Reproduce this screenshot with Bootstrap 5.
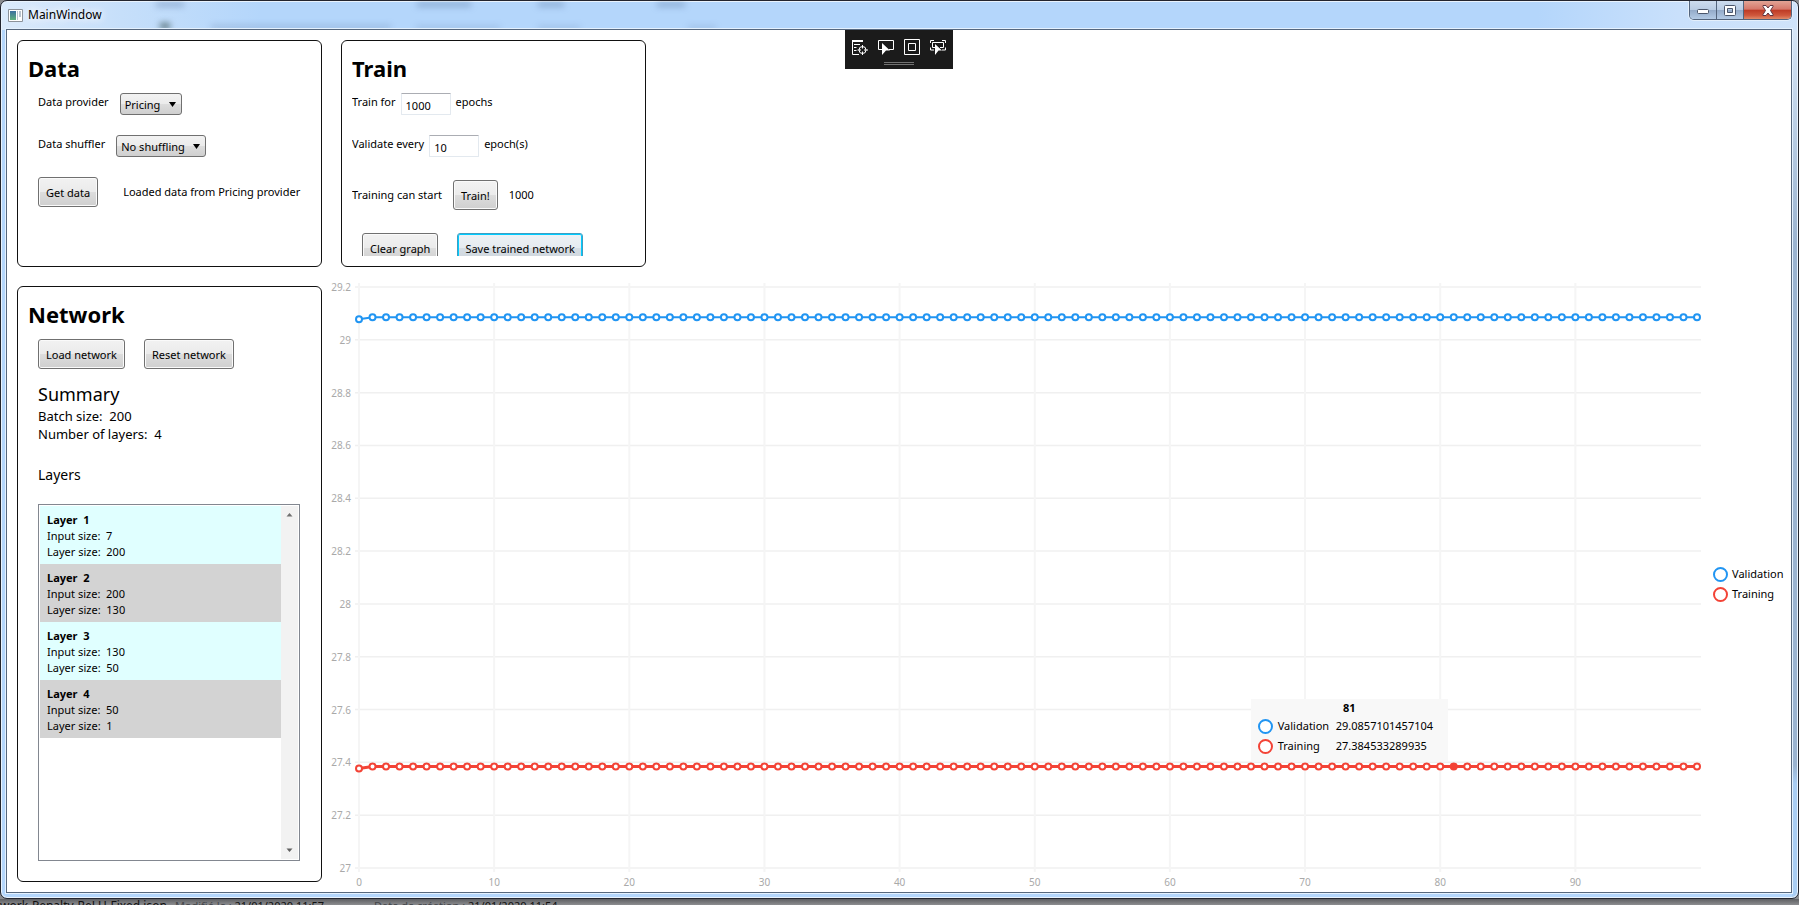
<!DOCTYPE html>
<html lang="en">
<head>
<meta charset="utf-8">
<meta name="viewport" content="width=device-width, initial-scale=1">
<title>MainWindow</title>
<link href="https://cdn.jsdelivr.net/npm/bootstrap@5.3.0/dist/css/bootstrap.min.css" rel="stylesheet">
<style>
  :root { --ui: "Noto Sans", "Open Sans", sans-serif; }
  html, body { height: 100%; }
  body { font: 11px/16px var(--ui); color: #000; background: #fff; overflow: hidden; }

  .desktop { height: 100vh; min-height: 760px; margin-right: 8px; background: #8a8b8e; }
  .window { border: 1px solid #23252e; border-radius: 7px; box-shadow: inset 0 0 0 1px #e9f3fd; padding: 0 6px 5px 5px; overflow: hidden;
    background: linear-gradient(to right, #dbeafb 0, #c6dffa 120px, #b4d6fb 260px, #b4d6fb calc(100% - 260px), #c9e0fb calc(100% - 120px), #cfe3fa 100%) no-repeat 0 0 / 100% 29px,
      linear-gradient(#d6e5f6 0, #9ab3d0 24%, #9ab3d0 82%, #a9cdf3 84%) no-repeat right 0 top 29px / 6px 100%, #b4d6fb; }
  .title-bar { height: 28px; }
  .title-text { font-size: 12px; line-height: 16px; text-shadow: 0 0 8px #fff, 0 0 8px #fff; }
  .title-id { padding: 6px 0 0 2px; gap: 5px; }
  .ghost { position: absolute; left: 0; top: 0; filter: blur(3px); }
  .caption-btns { border: 1px solid #53647c; border-top: 0; border-radius: 0 0 5px 5px; box-shadow: 0 0 0 1px #e4effb; overflow: hidden; height: 19px; }
  .cap-btn { border: 0; padding: 0; width: 27px; background: linear-gradient(#cddcee 0, #b9cce3 48%, #93aac8 50%, #b3cae5 100%); border-right: 1px solid #53647c; }
  .cap-close { width: 47px; border-right: 0; background: linear-gradient(#e2a495 0, #d5776a 46%, #bd3a24 50%, #d0583d 80%, #e08b6a 100%); }
  .cap-btn svg, .tool-btn svg { display: block; margin: auto; }

  .client { background: #fff; border: 1px solid #56677d; box-shadow: 0 0 0 1px #e4f1fe; padding: 10px 3px 10px 10px; }
  .side { width: 305px; flex: none; }
  .panel { border: 1px solid #111; border-radius: 6px; padding: 10px; background: #fff; }
  .panel-short { height: 227px; width: 305px; }
  .clip { height: 100%; overflow: hidden; }
  h1 { font-size: 22px; line-height: 34px; font-weight: 700; margin: 0 0 8px; }
  h2 { font-size: 18px; line-height: 25px; font-weight: 400; margin: 0; }
  h3 { font-size: 14px; line-height: 20px; font-weight: 400; margin: 0; }
  .field { height: 42px; }
  .field label, .field span { padding-top: 1px; }
  .data-body { padding-left: 10px; }
  .data-body .field { gap: 11px; }
  .data-row { gap: 25px; }

  .ui-btn { font: 11px/16px var(--ui); color: #000; height: 30px; padding: 1px 7px 0; border: 1px solid #707070; border-radius: 3px; box-shadow: inset 0 0 0 1px #fafafa; background: linear-gradient(#f2f2f2 0, #ebebeb 50%, #dddddd 50%, #cfcfcf 100%); white-space: nowrap; }
  .ui-btn-on { border-color: #3c9fc4; box-shadow: inset 0 0 0 1px #00ccff; background: linear-gradient(#edf1f5 0, #e5ebf0 50%, #d5dde4 50%, #cdd5dc 100%); }
  .ui-select { appearance: none; font: 11px/20px var(--ui); color: #000; height: 22px; padding: 1px 16px 0 4px; border: 1px solid #707070; border-radius: 3px;
    background: url("data:image/svg+xml,%3Csvg xmlns='http://www.w3.org/2000/svg' width='8' height='5'%3E%3Cpath d='M0 0h7L3.5 5z'/%3E%3C/svg%3E") no-repeat right 4px top 8px, linear-gradient(#f2f2f2 0, #ebebeb 50%, #dddddd 50%, #cfcfcf 100%); }
  .sel-a { width: 62px; }
  .sel-b { width: 90px; }
  .ui-input { width: 50px; height: 22px; font: 11px/18px var(--ui); color: #000; padding: 2px 4px 0; border: 1px solid #e3e9ef; border-top-color: #abadb3; border-radius: 1px; }

  .net-panel { margin-top: 19px; }
  .net-body { padding: 0 11px 10px 10px; }
  .net-btns { gap: 19px; margin-bottom: 13px; }
  .net-body h3 { margin: 22px 0 19px; }
  .facts { font-size: 13px; line-height: 18px; }
  .layer-box { border: 1px solid #828790; padding: 1px; min-height: 0; }
  .layer-item { padding: 6px 7px 4px; background: #e0ffff; }
  .layer-item:nth-child(even) { background: #d3d3d3; }
  .bar-track { width: 17px; background: #f2f2f2; }

  .main-col { padding-left: 19px; min-width: 0; }
  .train-panel .field { gap: 5px; }
  .train-row { gap: 11px; margin-top: 3px; }
  .last-row { gap: 19px; margin: 23px 0 0 10px; }
  .chart-row { margin: 0 0 -10px -10px; min-height: 0; }
  .plot { min-width: 0; }
  .plot svg { position: absolute; inset: 0; width: 100%; height: 100%; }
  .plot text { font: 10px var(--ui); fill: #a9a9a9; }
  .ring { width: 15px; height: 15px; border-radius: 50%; border: 2px solid #2195f2; background: #fff; flex: none; }
  .ring-red { border-color: #f34336; }
  .legend-row { height: 20px; gap: 4px; }
  .legend-col { width: 75px; flex: none; padding-top: 9px; }
  .tip { position: absolute; background: rgba(248,248,248,.94); padding: 1px 7px 5px; width: 197px; transform: translate(-100%, -100%); margin: -5px 0 0 -6px; }
  .tip td { height: 20px; padding: 0; white-space: nowrap; }
  .tip-k { width: 20px; }
  .tip-n { width: 58px; }

  .tools { position: absolute; top: 0; left: 50%; margin-left: -54px; width: 108px; height: 39px; background: #1b1b1b; padding: 8px 2px; }
  .tool-btn { width: 26px; height: 18px; padding: 0; border: 0; background: none; }
  .grip { width: 30px; height: 3px; border: solid #727272; border-width: 1px 0; margin: 6px auto 0; }

  .task-info { height: 6px; background: linear-gradient(#5e5f62, #8c8d90); font: 11px/14px var(--ui); color: #111; white-space: nowrap; gap: 50px; }
  .task-name { font-size: 12px; margin-right: 8px; }
  .dim { color: #44464a; }
</style>
</head>
<body>
<div class="desktop d-flex flex-column">
  <div class="window d-flex flex-column flex-grow-1">
    <header class="title-bar d-flex justify-content-between align-items-start position-relative">
      <svg class="ghost" width="760" height="28" aria-hidden="true" fill="#52709a"><path opacity=".4" d="M150 1h28v5h-28zM411 1h54v5h-54zM532 1h26v5h-26zM651 1h28v5h-28z"/><path opacity=".3" d="M205 24h180v4H205zM410 25h84v3h-84zM532 25h42v3h-42zM682 25h28v3h-28z"/><path fill="#2f4a4a" opacity=".7" d="M154 22h10v6h-10z"/></svg>
      <div class="title-id d-flex align-items-center position-relative">
        <svg width="15" height="13" viewBox="0 0 15 13"><defs><linearGradient id="ic" x2="0" y2="1"><stop stop-color="#3b6fa0"/><stop offset="1" stop-color="#5fb27c"/></linearGradient></defs><path fill="#fff" stroke="#8c929a" d="M.5.5h14v12H.5z"/><path fill="url(#ic)" d="M2 2h6v9H2z"/><path fill="#b8c4cf" d="M9 2h1v9H9zM11 2h2v6h-2z"/></svg>
        <span class="title-text">MainWindow</span>
      </div>
      <div class="caption-btns d-flex position-relative">
        <button class="cap-btn" aria-label="Minimize"><svg width="12" height="8" viewBox="0 0 12 8"><rect x=".5" y="3.500" width="11" height="4" rx="1" fill="#fff" stroke="#4b566b"/></svg></button>
        <button class="cap-btn" aria-label="Maximize"><svg width="12" height="11" viewBox="0 0 12 11"><path fill="#fff" stroke="#4b566b" fill-rule="evenodd" d="M1.500.5h9a1 1 0 0 1 1 1v8a1 1 0 0 1-1 1h-9a1 1 0 0 1-1-1v-8a1 1 0 0 1 1-1zM3.500 3.500v4h5v-4z"/></svg></button>
        <button class="cap-btn cap-close" aria-label="Close"><svg width="12" height="11" viewBox="0 0 12 11"><path fill="#fff" stroke="#5d3440" stroke-linejoin="round" d="M1 .5h3l2 2.500 2-2.500h3v1L8.500 5.500 11 9.500v1H8L6 8l-2 2.500H1v-1l2.500-4L1 1.500z"/></svg></button>
      </div>
    </header>
    <main class="client d-flex flex-grow-1 position-relative">
      <div class="side d-flex flex-column">
        <section class="panel panel-short">
          <h1>Data</h1>
          <div class="data-body">
            <div class="field d-flex"><label for="prov">Data provider</label><select id="prov" class="ui-select sel-a"><option>Pricing</option></select></div>
            <div class="field d-flex"><label for="shuf">Data shuffler</label><select id="shuf" class="ui-select sel-b"><option>No shuffling</option></select></div>
            <div class="data-row d-flex align-items-center"><button class="ui-btn">Get data</button><span>Loaded data from Pricing provider</span></div>
          </div>
        </section>
        <section class="panel net-panel d-flex flex-column flex-grow-1">
          <h1>Network</h1>
          <div class="net-body d-flex flex-column flex-grow-1">
            <div class="d-flex net-btns"><button class="ui-btn">Load network</button><button class="ui-btn">Reset network</button></div>
            <h2>Summary</h2>
            <div class="facts">Batch size:&nbsp; 200</div>
            <div class="facts">Number of layers:&nbsp; 4</div>
            <h3>Layers</h3>
            <div class="layer-box d-flex flex-grow-1">
              <div class="flex-grow-1">
                <div class="layer-item"><b>Layer&nbsp; 1</b><br>Input size:&nbsp; 7<br>Layer size:&nbsp; 200</div>
                <div class="layer-item"><b>Layer&nbsp; 2</b><br>Input size:&nbsp; 200<br>Layer size:&nbsp; 130</div>
                <div class="layer-item"><b>Layer&nbsp; 3</b><br>Input size:&nbsp; 130<br>Layer size:&nbsp; 50</div>
                <div class="layer-item"><b>Layer&nbsp; 4</b><br>Input size:&nbsp; 50<br>Layer size:&nbsp; 1</div>
              </div>
              <div class="bar-track d-flex flex-column justify-content-between align-items-center">
                <svg width="7" height="17" viewBox="0 0 7 17"><path fill="#707070" d="M.5 10.500 3.500 7l3 3.500z"/></svg>
                <svg width="7" height="17" viewBox="0 0 7 17"><path fill="#606060" d="M.5 6.500h6l-3 3.500z"/></svg>
              </div>
            </div>
          </div>
        </section>
      </div>
      <div class="main-col d-flex flex-column flex-grow-1">
        <section class="panel panel-short train-panel">
          <div class="clip">
            <h1>Train</h1>
            <div class="field d-flex"><label for="ep">Train for</label><input id="ep" class="ui-input" value="1000"><span>epochs</span></div>
            <div class="field d-flex"><label for="val">Validate every</label><input id="val" class="ui-input" value="10"><span>epoch(s)</span></div>
            <div class="train-row d-flex align-items-center"><span>Training can start</span><button class="ui-btn">Train!</button><span>1000</span></div>
            <div class="d-flex last-row"><button class="ui-btn">Clear graph</button><button class="ui-btn ui-btn-on">Save trained network</button></div>
          </div>
        </section>
        <div class="chart-row d-flex flex-grow-1">
          <div class="plot position-relative flex-grow-1" id="plot">
            <svg id="chart" role="img" aria-label="Validation and training error"></svg>
            <div class="tip" id="tip">
              <div class="text-center fw-bold">81</div>
              <table>
                <tr><td class="tip-k"><div class="ring"></div></td><td class="tip-n">Validation</td><td>29.0857101457104</td></tr>
                <tr><td><div class="ring ring-red"></div></td><td>Training</td><td>27.384533289935</td></tr>
              </table>
            </div>
          </div>
          <div class="legend-col d-flex flex-column justify-content-center">
            <div class="legend-row d-flex align-items-center"><div class="ring"></div>Validation</div>
            <div class="legend-row d-flex align-items-center"><div class="ring ring-red"></div>Training</div>
          </div>
        </div>
      </div>
      <div class="tools">
        <div class="d-flex">
          <button class="tool-btn" aria-label="Live tree"><svg width="16" height="16" viewBox="0 0 16 16" fill="none" stroke="#fff"><path fill="#fff" stroke="none" d="M0 1h11v2H0z"/><path d="M.5 1v14.500H7M2 5.500h6M2 8.500h2.500M2 11.500h2.500"/><circle cx="10.500" cy="11" r="3.500"/><path d="M10.500 6v3.500M10.500 12.500V16M5.500 11H9M12 11h4"/></svg></button>
          <button class="tool-btn" aria-label="Select element"><svg width="16" height="16" viewBox="0 0 16 16"><path fill="none" stroke="#fff" d="M4 10.500H.5v-9h15v9H11"/><path fill="#fff" d="M4 4l8 7.500H8L4 16z"/></svg></button>
          <button class="tool-btn" aria-label="Layout adorners"><svg width="16" height="16" viewBox="0 0 16 16" fill="none" stroke="#fff"><path d="M.5.5h15v15H.5zM4.500 4.500h7v7h-7z"/></svg></button>
          <button class="tool-btn" aria-label="Track focus"><svg width="16" height="16" viewBox="0 0 16 16"><path fill="none" stroke="#fff" d="M.5 4V1.500H4M12 1.500h3.500V4M.5 8.500V11H4M15.500 8.500V11H12M5 8.500H2.500v-5h11v5H10"/><path fill="#fff" d="M5 5l7 6.500H8.500L5 16z"/></svg></button>
        </div>
        <div class="grip"></div>
      </div>
    </main>
  </div>
  <footer class="task-info d-flex">
    <div><span class="task-name">work-Penalty-ReLU-Fixed.json</span><span class="dim">Modifié le :</span> 21/01/2020 11:57</div>
    <div><span class="dim">Date de création :</span> 21/01/2020 11:54</div>
  </footer>
</div>
<script src="https://cdn.jsdelivr.net/npm/bootstrap@5.3.0/dist/js/bootstrap.bundle.min.js"></script>
<script>
  // Draws the two error curves to the current size of the plot area.
  const plot = document.getElementById('plot'), svg = document.getElementById('chart'), tip = document.getElementById('tip');
  function draw() {
    const w = plot.clientWidth, h = plot.clientHeight;
    const left = 28, right = w - 16, top = 20, bottom = h - 24;
    const px = i => left + (right - left) * i / 99;
    const py = v => top + (bottom - top) * (29.2 - v) / 2.2;
    let s = '';
    for (let k = 0; k <= 11; k++) {
      const v = 29.2 - k * .2, y = py(v);
      s += `<path d="M${left - 4} ${y}H${right + 4}" stroke="#f0f0f0" stroke-width="1.500"/>`;
      s += `<text x="${left - 8}" y="${y + 4}" text-anchor="end">${+v.toFixed(1)}</text>`;
    }
    for (let i = 0; i < 100; i += 10) {
      s += `<path d="M${px(i)} ${top - 4}V${bottom + 4}" stroke="#f5f5f5" stroke-width="2"/>`;
      s += `<text x="${px(i)}" y="${bottom + 18}" text-anchor="middle">${i}</text>`;
    }
    for (const [c, first, rest, lw] of [['#2195f2', 29.078, 29.0857, 2], ['#f34336', 27.377, 27.3845, 3]]) {
      const val = i => i ? rest : first;
      let d = '', dots = '';
      for (let i = 0; i < 100; i++) {
        d += (i ? 'L' : 'M') + px(i) + ' ' + py(val(i));
        dots += `<circle cx="${px(i)}" cy="${py(val(i))}" r="3" fill="${lw === 3 && i === 81 ? c : '#fff'}"/>`;
      }
      s += `<g stroke="${c}" stroke-width="2"><path d="${d}" fill="none" stroke-width="${lw}"/>${dots}</g>`;
    }
    svg.innerHTML = s;
    tip.style.left = px(81) + 'px';
    tip.style.top = py(27.3845) + 'px';
  }
  draw();
  addEventListener('resize', draw);
</script>
</body>
</html>
